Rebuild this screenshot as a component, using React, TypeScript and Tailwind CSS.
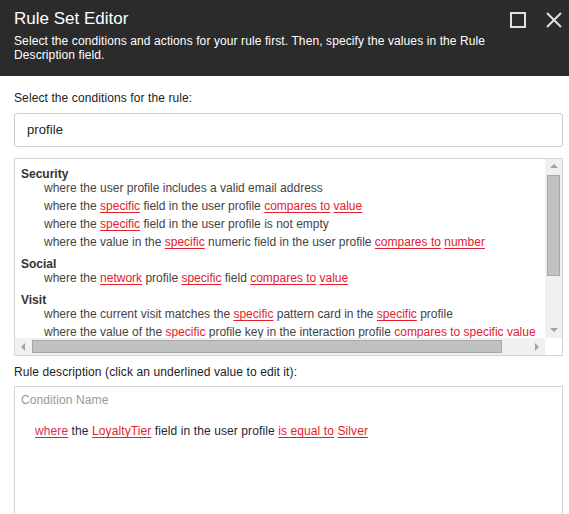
import React from "react"

type Part = string | { link: string }

const groups: { title: string; items: Part[][] }[] = [
  {
    title: "Security",
    items: [
      ["where the user profile includes a valid email address"],
      ["where the ", { link: "specific" }, " field in the user profile ", { link: "compares to" }, " ", { link: "value" }],
      ["where the ", { link: "specific" }, " field in the user profile is not empty"],
      [
        "where the value in the ",
        { link: "specific" },
        " numeric field in the user profile ",
        { link: "compares to" },
        " ",
        { link: "number" },
      ],
    ],
  },
  {
    title: "Social",
    items: [["where the ", { link: "network" }, " profile ", { link: "specific" }, " field ", { link: "compares to" }, " ", { link: "value" }]],
  },
  {
    title: "Visit",
    items: [
      ["where the current visit matches the ", { link: "specific" }, " pattern card in the ", { link: "specific" }, " profile"],
      [
        "where the value of the ",
        { link: "specific" },
        " profile key in the interaction profile ",
        { link: "compares to" },
        " ",
        { link: "specific value" },
      ],
    ],
  },
]

function Line({ parts }: { parts: Part[] }) {
  return (
    <div className="leading-[14px] pb-[4px] pl-[23px] whitespace-pre">
      {parts.map((p, i) =>
        typeof p === "string" ? (
          <span key={i}>{p}</span>
        ) : (
          <span key={i} className="text-[#e3202c] underline decoration-[#e3202c] underline-offset-2">
            {p.link}
          </span>
        )
      )}
    </div>
  )
}

function Arrow({ dir }: { dir: "up" | "down" | "left" | "right" }) {
  const pts = {
    up: "1,6 5,2 9,6",
    down: "1,3 5,7 9,3",
    left: "6,1 2,5 6,9",
    right: "3,1 7,5 3,9",
  }[dir]
  return (
    <svg width="10" height="10" viewBox="0 0 10 10">
      <polygon points={pts} fill="#a3a3a3" />
    </svg>
  )
}

export default function App() {
  return (
    <div className="w-[569px] h-[514px] overflow-hidden bg-white font-['Liberation_Sans',Arial,sans-serif] text-[12px] tracking-[0.1px] text-[#333]">
      <div className="bg-[#2b2b2b] h-[76px] pl-[14px] pr-[7px] pt-[8px] flex gap-[8px]">
        <div className="flex-1">
          <h1 className="text-white text-[17px] leading-[22px] tracking-normal">Rule Set Editor</h1>
          <p className="text-white text-[12px] leading-[14px] mt-[4px]">
            Select the conditions and actions for your rule first. Then, specify the values in the Rule Description field.
          </p>
        </div>
        <div className="flex gap-[20px] pt-[4px] shrink-0">
          <svg width="16" height="16" viewBox="0 0 16 16">
            <rect x="1" y="1" width="14" height="14" fill="none" stroke="#e0e0e0" strokeWidth="2" />
          </svg>
          <svg width="16" height="16" viewBox="0 0 16 16">
            <path d="M1 1 L15 15 M15 1 L1 15" stroke="#e0e0e0" strokeWidth="2" />
          </svg>
        </div>
      </div>

      <div className="pl-[14px] pr-[6px] pt-[15px]">
        <div className="text-[#222] leading-[14px]">Select the conditions for the rule:</div>
        <div className="mt-[8px] h-[34px] border border-[#cccccc] rounded-[3px] flex items-center pl-[12px] text-[13px] text-[#222]">
          profile
        </div>

        <div className="mt-[11px] h-[198px] border border-[#d4d4d4] flex flex-col">
          <div className="flex flex-1 min-h-0">
            <div className="flex-1 overflow-hidden pt-[8px] pl-[6px] text-[#444] tracking-normal">
              {groups.map((g, gi) => (
                <div key={g.title} className={gi ? "pt-[4px]" : ""}>
                  <div className="font-bold text-[#333] leading-[14px]">{g.title}</div>
                  {g.items.map((it, i) => (
                    <Line key={i} parts={it} />
                  ))}
                </div>
              ))}
            </div>
            <div className="w-[17px] bg-[#f0f0f0] flex flex-col items-center">
              <div className="h-[16px] flex items-center justify-center">
                <Arrow dir="up" />
              </div>
              <div className="w-[13px] h-[101px] bg-[#c1c1c1] border border-[#a8a8a8]" />
              <div className="flex-1" />
              <div className="h-[16px] flex items-center justify-center">
                <Arrow dir="down" />
              </div>
            </div>
          </div>
          <div className="h-[17px] flex">
            <div className="flex-1 bg-[#f0f0f0] flex items-center">
              <div className="w-[17px] flex justify-center">
                <Arrow dir="left" />
              </div>
              <div className="w-[470px] h-[13px] bg-[#c1c1c1] border border-[#a8a8a8]" />
              <div className="flex-1" />
              <div className="w-[17px] flex justify-center">
                <Arrow dir="right" />
              </div>
            </div>
            <div className="w-[17px] bg-white" />
          </div>
        </div>

        <div className="mt-[9px] text-[#222] leading-[14px]">Rule description (click an underlined value to edit it):</div>
        <div className="mt-[7px] h-[160px] border border-[#d4d4d4] px-[6px] pt-[6px]">
          <div className="text-[#999] leading-[14px]">Condition Name</div>
          <div className="mt-[17px] pl-[14px] text-[#1f1f33] leading-[14px] whitespace-pre">
            <span className="text-[#d92a5a] underline decoration-[#e3202c] underline-offset-2">where</span>
            <span> the </span>
            <span className="text-[#e3202c] underline decoration-[#e3202c] underline-offset-2">LoyaltyTier</span>
            <span> field in the user profile </span>
            <span className="text-[#e3202c] underline decoration-[#e3202c] underline-offset-2">is equal to</span>
            <span> </span>
            <span className="text-[#e3202c] underline decoration-[#e3202c] underline-offset-2">Silver</span>
          </div>
        </div>
      </div>
    </div>
  )
}
